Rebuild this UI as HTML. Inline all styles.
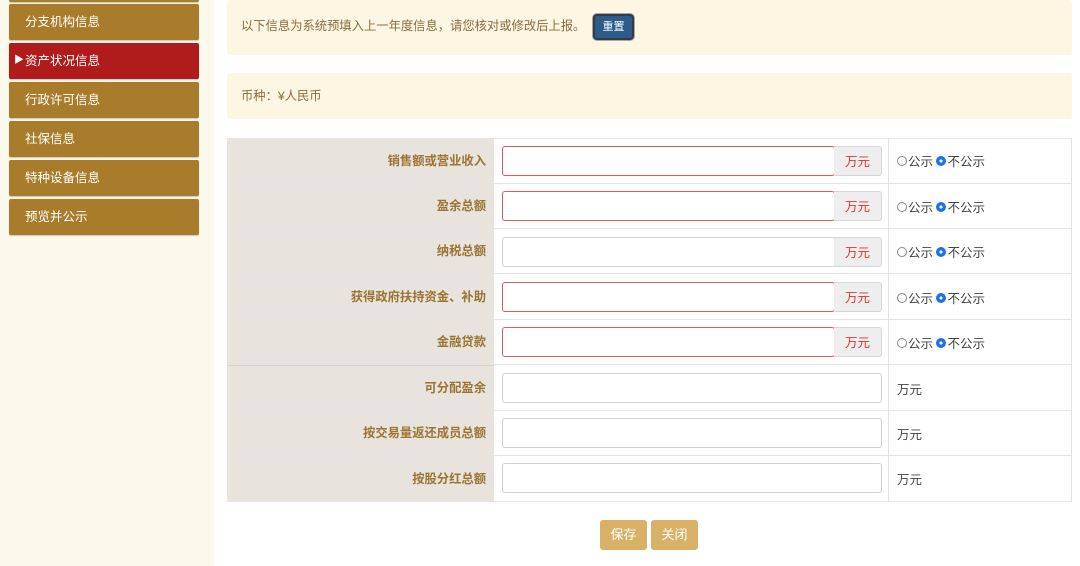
<!DOCTYPE html>
<html><head><meta charset="utf-8"><style>
*{margin:0;padding:0;box-sizing:border-box}
body{width:1080px;height:566px;overflow:hidden;background:#fff;font-family:"Liberation Sans","Noto Sans CJK SC",sans-serif;position:relative;font-size:13px}
.side{position:absolute;left:0;top:0;width:214px;height:566px;background:#fbf8ec}
.it{position:absolute;left:9px;width:190px;height:36px;background:#a97c2c;color:#fff;font-size:12.5px;line-height:37px;padding-left:16px;border-radius:2px;box-shadow:0 1px 1px rgba(0,0,0,.2)}
.it.act{background:#b01c1c}
.box{position:absolute;left:227px;width:845px;background:#fcf6e2;border-radius:3px;color:#8a6d3b;font-size:12.3px}
.btn{position:absolute;left:593px;top:14px;width:41px;height:26px;background:#2b5c8c;border:2px solid #3a3a3a;border-radius:4px;color:#fff;font-size:11px;text-align:center;line-height:22px;box-shadow:0 0 0 1px #9ab}
.lab{position:absolute;left:227px;width:267px;background:#e8e3dc;text-align:right;padding-right:8px;color:#9a7433;font-weight:bold;font-size:12.3px}
.row{position:absolute;left:227px;width:845px;border-bottom:1px solid #e4e4e4}
.cell{position:absolute;left:494px;width:395px;border-right:1px solid #e4e4e4}
.inp{position:absolute;left:502px;height:30px;border:1px solid #d0d0d0;border-radius:3px;background:#fff}
.inp.red{border-color:#e05a5a}
.add{position:absolute;left:834px;width:48px;height:30px;background:#eeeeee;border:1px solid #d6d6d6;border-left:none;border-radius:0 3px 3px 0;color:#d33;text-align:center;line-height:30px;font-size:12.5px}
.rad{position:absolute;left:897px;color:#444;font-size:12.5px}
.r{display:inline-block;width:10px;height:10px;border:1px solid #888;border-radius:50%;vertical-align:0;margin-right:1px}
.r.on{border-color:#1a73e8;background:radial-gradient(circle,#fff 0 25%,#1a73e8 30%)}
.wy{position:absolute;left:897px;color:#444;font-size:12.5px}
.b2{position:absolute;top:520px;width:47px;height:30px;background:#d8b066;color:#fff;border-radius:3px;text-align:center;line-height:30px;font-size:13px}
</style></head><body>
<div class="side">
<div class="it" style="top:-34px"></div>
<div class="it" style="top:4px">分支机构信息</div>
<div class="it act" style="top:43px">资产状况信息<span style="position:absolute;left:5px;top:-1px;font-size:10px">▶</span></div>
<div class="it" style="top:82px">行政许可信息</div>
<div class="it" style="top:121px">社保信息</div>
<div class="it" style="top:160px">特种设备信息</div>
<div class="it" style="top:199px">预览并公示</div>
</div>
<div class="box" style="top:0;height:55px;line-height:52px;padding-left:14px">以下信息为系统预填入上一年度信息，请您核对或修改后上报。</div>
<div class="btn">重置</div>
<div class="box" style="top:73px;height:46px;line-height:46px;padding-left:14px">币种：¥人民币</div>

<div class="row" style="top:138px;height:1px;border-bottom:1px solid #e4e4e4"></div>
<div style="position:absolute;left:1071px;top:138px;width:1px;height:364px;background:#e4e4e4"></div>

<div class="lab" style="top:138px;height:364px"></div>
<div style="position:absolute;left:227px;top:365px;width:267px;height:1px;background:#d9d3ca"></div>

<div class="row" style="top:138px;height:46px"></div>
<div class="lab" style="top:139px;height:44px;line-height:44px;background:none">销售额或营业收入</div>
<div class="cell" style="top:138px;height:46px"></div>
<div class="inp red" style="top:146px;width:333px"></div><div class="add" style="top:146px">万元</div>
<div class="rad" style="top:151px"><span class="r"></span>公示 <span class="r on"></span>不公示</div>

<div class="row" style="top:184px;height:45px"></div>
<div class="lab" style="top:184px;height:45px;line-height:45px;background:none">盈余总额</div>
<div class="cell" style="top:184px;height:45px"></div>
<div class="inp red" style="top:191px;width:333px"></div><div class="add" style="top:191px">万元</div>
<div class="rad" style="top:197px"><span class="r"></span>公示 <span class="r on"></span>不公示</div>

<div class="row" style="top:229px;height:45px"></div>
<div class="lab" style="top:229px;height:45px;line-height:45px;background:none">纳税总额</div>
<div class="cell" style="top:229px;height:45px"></div>
<div class="inp" style="top:237px;width:333px"></div><div class="add" style="top:237px">万元</div>
<div class="rad" style="top:242px"><span class="r"></span>公示 <span class="r on"></span>不公示</div>

<div class="row" style="top:274px;height:46px"></div>
<div class="lab" style="top:274px;height:46px;line-height:46px;background:none">获得政府扶持资金、补助</div>
<div class="cell" style="top:274px;height:46px"></div>
<div class="inp red" style="top:282px;width:333px"></div><div class="add" style="top:282px">万元</div>
<div class="rad" style="top:288px"><span class="r"></span>公示 <span class="r on"></span>不公示</div>

<div class="row" style="top:320px;height:45px"></div>
<div class="lab" style="top:320px;height:45px;line-height:45px;background:none">金融贷款</div>
<div class="cell" style="top:320px;height:45px"></div>
<div class="inp red" style="top:327px;width:333px"></div><div class="add" style="top:327px">万元</div>
<div class="rad" style="top:333px"><span class="r"></span>公示 <span class="r on"></span>不公示</div>

<div class="row" style="top:365px;height:46px"></div>
<div class="lab" style="top:365px;height:46px;line-height:46px;background:none">可分配盈余</div>
<div class="cell" style="top:365px;height:46px"></div>
<div class="inp" style="top:373px;width:380px"></div>
<div class="wy" style="top:379px">万元</div>

<div class="row" style="top:411px;height:45px"></div>
<div class="lab" style="top:411px;height:45px;line-height:45px;background:none">按交易量返还成员总额</div>
<div class="cell" style="top:411px;height:45px"></div>
<div class="inp" style="top:418px;width:380px"></div>
<div class="wy" style="top:424px">万元</div>

<div class="row" style="top:456px;height:46px"></div>
<div class="lab" style="top:456px;height:46px;line-height:46px;background:none">按股分红总额</div>
<div class="cell" style="top:456px;height:46px"></div>
<div class="inp" style="top:463px;width:380px"></div>
<div class="wy" style="top:469px">万元</div>

<div class="b2" style="left:600px">保存</div>
<div class="b2" style="left:651px">关闭</div>
</body></html>
